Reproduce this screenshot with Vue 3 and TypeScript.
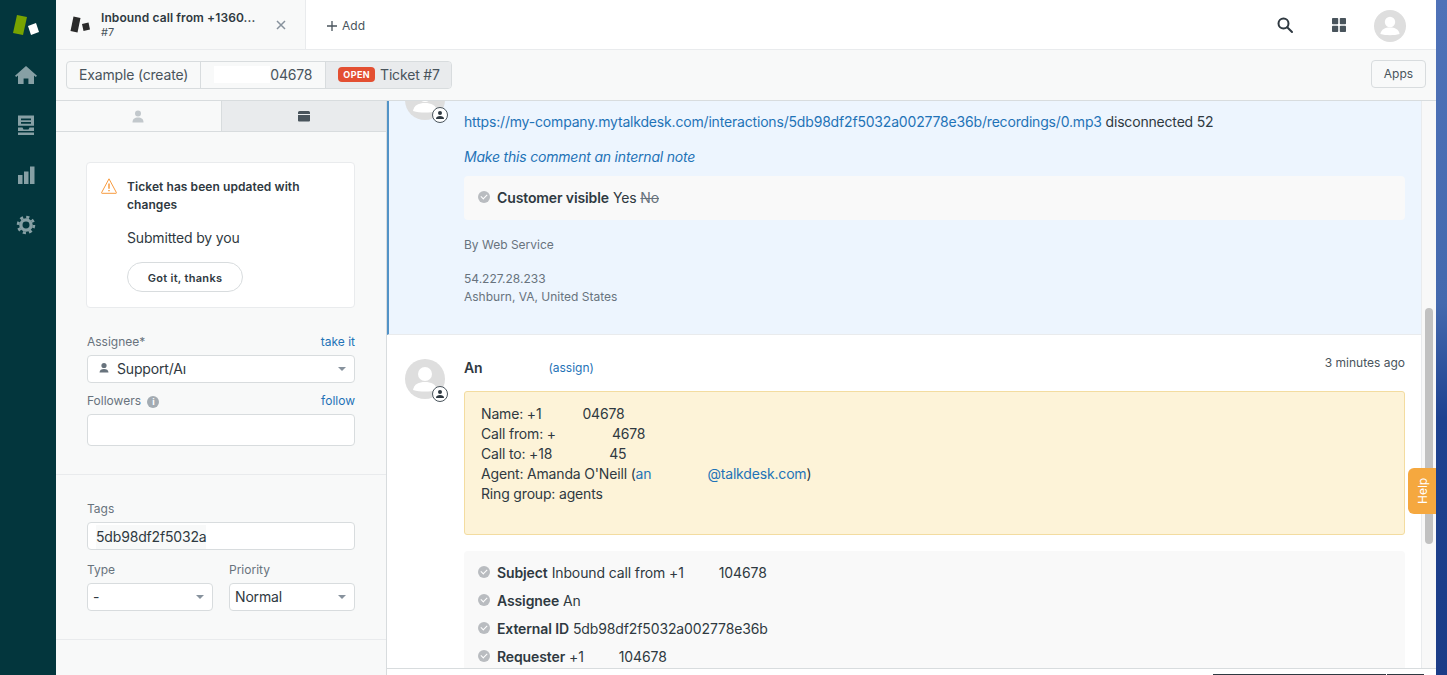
<script setup lang="ts">
const navItems = ['home', 'views', 'reports', 'admin']

const callLines = [
  { label: 'Name: +1', gap: 41, rest: '04678' },
  { label: 'Call from: +', gap: 56, rest: '4678' },
  { label: 'Call to: +18', gap: 57, rest: '45' },
]

const auditRows = [
  { name: 'Subject', text: 'Inbound call from +1', gap: 35, rest: '104678' },
  { name: 'Assignee', text: 'An', gap: 0, rest: '' },
  { name: 'External ID', text: '5db98df2f5032a002778e36b', gap: 0, rest: '' },
  { name: 'Requester', text: '+1', gap: 35, rest: '104678' },
]
</script>

<template>
  <div class="app">
    <nav class="sidebar">
      <svg class="logo" width="34" height="30" viewBox="0 0 34 30">
        <polygon points="6,5 16,7 12,25 2,23" fill="#78a300" />
        <polygon points="17,16 25,13 28,22 20,25" fill="#fff" />
      </svg>
      <button v-for="item in navItems" :key="item" class="nav-item">
        <svg v-if="item === 'home'" width="24" height="24" viewBox="0 0 24 24" fill="#87a0a5">
          <path d="M12 3 1 12.800l1.200 1.200L4 12.400V21h5.600v-5.500h4.800V21H20v-8.600l1.800 1.600 1.200-1.200z" />
        </svg>
        <svg v-else-if="item === 'views'" width="24" height="24" viewBox="0 0 24 24" fill="#87a0a5">
          <path d="M4 2.500h16v10.200H4zM7 5.400v1.800h10V5.400zM7 9v1.800h10V9z" fill-rule="evenodd" />
          <path d="M4 14.500h4.500l1 2h5l1-2H20v3.500H4zM4 19.400h16v2.600H4z" />
        </svg>
        <svg v-else-if="item === 'reports'" width="24" height="24" viewBox="0 0 24 24" fill="#87a0a5">
          <path d="M4 12h4.500v9H4zM10 8.500h4.500V21H10zM16 3.500h4.500V21H16z" />
        </svg>
        <svg v-else width="22" height="22" viewBox="0 0 24 24" fill="none" stroke="#87a0a5">
          <circle cx="12" cy="12" r="5.600" stroke-width="3.600" />
          <circle cx="12" cy="12" r="8.600" stroke-width="3" stroke-dasharray="3.400 3.350" />
        </svg>
      </button>
    </nav>

    <div class="main">
      <header class="topbar">
        <div class="tab">
          <svg width="24" height="20" viewBox="0 0 24 20">
            <polygon points="3.500,1.500 10.500,3 7.500,17.500 .5,16" fill="#2a2a2a" />
            <polygon points="12,9 18.500,7.500 20,14.500 13.500,16" fill="#2a2a2a" />
          </svg>
          <div class="tab-text">
            <div class="tab-title">Inbound call from +1360...</div>
            <div class="tab-sub">#7</div>
          </div>
          <svg class="tab-close" width="10" height="10" viewBox="0 0 10 10" stroke="#87929d" stroke-width="1.500">
            <path d="M1 1l8 8M9 1l-8 8" />
          </svg>
        </div>
        <div class="add-tab">
          <svg width="12" height="12" viewBox="0 0 12 12" stroke="#49545c" stroke-width="1.300">
            <path d="M6 1v10M1 6h10" />
          </svg>
          Add
        </div>
        <div class="top-actions">
          <svg width="18" height="18" viewBox="0 0 18 18" fill="none" stroke="#2f3941" stroke-width="2">
            <circle cx="7.500" cy="7.500" r="5" />
            <path d="M11.200 11.200 16 16" stroke-linecap="round" />
          </svg>
          <svg class="grid-icon" width="16" height="16" viewBox="0 0 16 16" fill="#49545c">
            <rect x="1" y="1" width="6.200" height="6.200" rx="0.800" />
            <rect x="8.800" y="1" width="6.200" height="6.200" rx="0.800" />
            <rect x="1" y="8.800" width="6.200" height="6.200" rx="0.800" />
            <rect x="8.800" y="8.800" width="6.200" height="6.200" rx="0.800" />
          </svg>
          <div class="user-avatar">
            <svg width="32" height="32" viewBox="0 0 40 40" fill="#fff">
              <circle cx="20" cy="15" r="6.500" />
              <path d="M8 30c1-6 6-8 12-8s11 2 12 8c-7 2-17 2-24 0z" />
            </svg>
          </div>
        </div>
      </header>

      <div class="subbar">
        <div class="crumbs">
          <div class="crumb">Example (create)</div>
          <div class="crumb crumb-phone"><span class="mask"></span>04678</div>
          <div class="crumb crumb-active"><span class="status">OPEN</span>Ticket #7</div>
        </div>
        <button class="apps-btn">Apps</button>
      </div>

      <div class="content">
        <aside class="panel">
          <div class="panel-tabs">
            <div class="panel-tab">
              <svg width="12" height="13" viewBox="0 0 12 13" fill="#c2c8cc">
                <circle cx="6" cy="3.400" r="3" />
                <path d="M.5 12.500c0-3.600 2-5 5.500-5s5.500 1.400 5.500 5z" />
              </svg>
            </div>
            <div class="panel-tab panel-tab-active">
              <svg width="12" height="12" viewBox="0 0 12 12" fill="#49545c">
                <path d="M1.500 1h9A1.500 1.500 0 0 1 12 2.500V4H0V2.500A1.500 1.500 0 0 1 1.500 1zM0 5h12v5.500a1 1 0 0 1-1 1H1a1 1 0 0 1-1-1z" />
              </svg>
            </div>
          </div>

          <section class="panel-section">
            <div class="notice">
              <svg width="16" height="16" viewBox="0 0 16 16" fill="none" stroke="#f79a3e" stroke-width="1">
                <path d="M8 .8.6 14.600c-.2.4 0 .7.4.7h14c.4 0 .6-.3.4-.7z" stroke-linejoin="round" />
                <path d="M8 5.500v5.200M8 12v1.300" stroke-width="1.500" />
              </svg>
              <div class="notice-body">
                <div class="notice-title">Ticket has been updated with changes</div>
                <div class="notice-text">Submitted by you</div>
                <button class="notice-btn">Got it, thanks</button>
              </div>
            </div>

            <div class="field-head assignee-head">
              <label>Assignee*</label><a>take it</a>
            </div>
            <div class="select select-assignee">
              <svg width="12" height="12" viewBox="0 0 12 12" fill="#68737d">
                <circle cx="6" cy="3.500" r="2.600" />
                <path d="M1.500 10.500c0-2.500 2-3.500 4.500-3.500s4.500 1 4.500 3.500z" />
              </svg>
              <span class="select-value">Support/A<span class="cut">ı</span></span>
              <i class="caret"></i>
            </div>

            <div class="field-head followers-head">
              <label>Followers <span class="info">i</span></label><a>follow</a>
            </div>
            <div class="input input-tall"></div>
          </section>

          <section class="panel-section tags-section">
            <div class="field-head"><label>Tags</label></div>
            <div class="input input-tags"><span class="tag">5db98df2f5032a</span></div>
            <div class="field-row">
              <div class="field-col">
                <div class="field-head"><label>Type</label></div>
                <div class="select"><span class="select-value">-</span><i class="caret"></i></div>
              </div>
              <div class="field-col">
                <div class="field-head"><label>Priority</label></div>
                <div class="select"><span class="select-value">Normal</span><i class="caret"></i></div>
              </div>
            </div>
          </section>
        </aside>

        <div class="conversation">
          <div class="thread">
            <article class="event event-first">
              <div class="avatar">
                <svg width="40" height="40" viewBox="0 0 40 40" fill="#fff">
                  <circle cx="20" cy="15" r="7" />
                  <path d="M8 31c1-6 6-8 12-8s11 2 12 8c-7 2-17 2-24 0z" />
                </svg>
                <span class="avatar-badge">
                  <svg width="10" height="10" viewBox="0 0 10 10" fill="#2f3941">
                    <circle cx="5" cy="3" r="2" />
                    <path d="M1 9c0-2.200 1.800-3 4-3s4 .8 4 3z" />
                  </svg>
                </span>
              </div>
              <div class="event-body">
                <p class="event-line">
                  <a>https://my-company.mytalkdesk.com/interactions/5db98df2f5032a002778e36b/recordings/0.mp3</a>
                  disconnected 52
                </p>
                <p class="internal-link"><a>Make this comment an internal note</a></p>
                <div class="audit audit-single">
                  <div class="audit-row">
                    <span class="check"></span>
                    <b>Customer visible</b>
                    <span>Yes <s>No</s></span>
                  </div>
                </div>
                <div class="meta">By Web Service</div>
                <div class="meta meta-ip">54.227.28.233<br />Ashburn, VA, United States</div>
              </div>
            </article>

            <article class="event">
              <div class="avatar">
                <svg width="40" height="40" viewBox="0 0 40 40" fill="#fff">
                  <circle cx="20" cy="15" r="7" />
                  <path d="M8 31c1-6 6-8 12-8s11 2 12 8c-7 2-17 2-24 0z" />
                </svg>
                <span class="avatar-badge">
                  <svg width="10" height="10" viewBox="0 0 10 10" fill="#2f3941">
                    <circle cx="5" cy="3" r="2" />
                    <path d="M1 9c0-2.200 1.800-3 4-3s4 .8 4 3z" />
                  </svg>
                </span>
              </div>
              <div class="event-body">
                <div class="event-head">
                  <b class="author">An</b>
                  <a class="assign">(assign)</a>
                  <span class="time">3 minutes ago</span>
                </div>
                <div class="call-box">
                  <div v-for="line in callLines" :key="line.label">
                    {{ line.label }}<span class="gap" :style="{ width: line.gap + 'px' }"></span>{{ line.rest }}
                  </div>
                  <div>Agent: Amanda O'Neill (<a>an<span class="gap gap-mail"></span>@talkdesk.com</a>)</div>
                  <div>Ring group: agents</div>
                </div>
                <div class="audit">
                  <div v-for="row in auditRows" :key="row.name" class="audit-row">
                    <span class="check"></span>
                    <b>{{ row.name }}</b>
                    <span>{{ row.text }}<span class="gap" :style="{ width: row.gap + 'px' }"></span>{{ row.rest }}</span>
                  </div>
                </div>
              </div>
            </article>
          </div>
          <div class="scroll-gutter"><div class="scroll-thumb"></div></div>
          <div class="composer">
            <span class="submit-edge submit-main"></span>
            <span class="submit-edge submit-more"></span>
          </div>
          <div class="help-tab">Help</div>
        </div>
      </div>
    </div>

    <div class="desktop"></div>
  </div>
</template>

<style>
html,
body {
  margin: 0;
  overflow: hidden;
}
</style>

<style scoped>
.app {
  display: flex;
  width: 1447px;
  height: 675px;
  overflow: hidden;
  font-family: Inter, "Liberation Sans", sans-serif;
  font-size: 14px;
  color: #2f3941;
  background: #fff;
}

a {
  color: #1f73b7;
}

.sidebar {
  flex: 0 0 56px;
  background: #03363d;
  display: flex;
  flex-direction: column;
  align-items: center;
}

.logo {
  margin: 10px 0;
}

.nav-item {
  width: 56px;
  height: 50px;
  padding: 0 4px 0 0;
  border: none;
  background: none;
  display: flex;
  align-items: center;
  justify-content: center;
}

.main {
  flex: 0 0 1380px;
  display: flex;
  flex-direction: column;
  min-width: 0;
}

.desktop {
  flex: 1;
  background: linear-gradient(#4f72b8 0, #4469ae 45%, #1e4290 62%, #1b3c87 100%);
}

.topbar {
  flex: 0 0 50px;
  box-sizing: border-box;
  display: flex;
  align-items: stretch;
  border-bottom: 1px solid #e9ebed;
}

.tab {
  flex: 0 0 250px;
  box-sizing: border-box;
  padding-left: 14px;
  display: flex;
  align-items: center;
  background: #f8f9f9;
  border-right: 1px solid #e9ebed;
}

.tab-text {
  margin: 1px 0 0 7px;
  width: 167px;
  font-size: 12px;
  line-height: 15px;
}

.tab-title {
  font-weight: 600;
  white-space: nowrap;
  letter-spacing: 0.1px;
}

.tab-sub {
  font-size: 11px;
  color: #49545c;
}

.tab-close {
  margin-left: 8px;
}

.add-tab {
  display: flex;
  align-items: center;
  gap: 4px;
  margin-left: 20px;
  padding-top: 2px;
  font-size: 12px;
  color: #49545c;
}

.top-actions {
  margin-left: auto;
  padding-right: 30px;
  display: flex;
  align-items: center;
}

.grid-icon {
  margin-left: 37px;
}

.user-avatar {
  margin: 2px 0 0 27px;
  width: 32px;
  height: 32px;
  border-radius: 50%;
  background: #dedede;
}

.subbar {
  flex: 0 0 51px;
  box-sizing: border-box;
  display: flex;
  align-items: center;
  justify-content: space-between;
  padding: 0 10px;
  background: #f8f9f9;
  border-bottom: 1px solid #d8dcde;
}

.crumbs {
  display: flex;
  height: 28px;
  box-sizing: border-box;
  border: 1px solid #d8dcde;
  border-radius: 4px;
  overflow: hidden;
}

.crumb {
  display: flex;
  align-items: center;
  padding: 0 12px 2px;
  font-size: 14px;
  letter-spacing: -0.17px;
  color: #49545c;
  border-right: 1px solid #d8dcde;
}

.crumb-phone {
  padding-left: 13px;
  padding-right: 13px;
}

.mask {
  width: 56px;
  height: 17px;
  background: #fff;
}

.crumb-active {
  padding-right: 11px;
  background: #e9ebed;
  border-right: none;
}

.status {
  background: #e34f32;
  color: #fff;
  font-size: 9px;
  font-weight: 700;
  letter-spacing: 0.4px;
  line-height: 15px;
  padding: 0 5px;
  border-radius: 4px;
  margin-right: 5px;
}

.apps-btn {
  height: 28px;
  width: 55px;
  margin-bottom: 2px;
  padding: 0 0 2px;
  background: #f8f9f9;
  border: 1px solid #d8dcde;
  border-radius: 4px;
  font: 12px Inter, "Liberation Sans", sans-serif;
  color: #49545c;
}

.content {
  flex: 1;
  display: flex;
  min-height: 0;
}

.panel {
  flex: 0 0 331px;
  box-sizing: border-box;
  background: #f8f9f9;
  border-right: 1px solid #d8dcde;
}

.panel-tabs {
  display: flex;
  height: 31px;
  box-sizing: border-box;
  border-bottom: 1px solid #d8dcde;
}

.panel-tab {
  flex: 1;
  display: flex;
  align-items: center;
  justify-content: center;
  border-right: 1px solid #d8dcde;
}

.panel-tab-active {
  background: #e9ebed;
  border-right: none;
}

.panel-section {
  padding: 30px 31px 28px 30px;
  border-bottom: 1px solid #e9ebed;
}

.notice {
  display: flex;
  gap: 10px;
  box-sizing: border-box;
  height: 146px;
  padding: 15px 15px 0 14px;
  background: #fff;
  border: 1px solid #e9ebed;
  border-radius: 4px;
}

.notice-body {
  flex: 1;
}

.notice-title {
  font-size: 12px;
  font-weight: 600;
  line-height: 18px;
  letter-spacing: 0.07px;
}

.notice-text {
  margin-top: 15px;
  font-size: 14px;
  letter-spacing: -0.17px;
  line-height: 18px;
}

.notice-btn {
  margin-top: 15px;
  width: 116px;
  height: 30px;
  padding: 2px 0 0;
  background: #fff;
  border: 1px solid #d8dcde;
  border-radius: 15px;
  font: 600 11px Inter, "Liberation Sans", sans-serif;
  letter-spacing: 0.3px;
  color: #2f3941;
}

.field-head {
  display: flex;
  justify-content: space-between;
  align-items: center;
  height: 14px;
  margin-bottom: 7px;
  margin-left: 1px;
  font-size: 12px;
  color: #68737d;
}

.assignee-head {
  margin-top: 26px;
}

.followers-head {
  margin-top: 10px;
}

.info {
  display: inline-block;
  width: 12px;
  height: 12px;
  margin-left: 3px;
  border-radius: 50%;
  background: #a3abb2;
  color: #fff;
  font-size: 9px;
  font-weight: 700;
  line-height: 12px;
  text-align: center;
}

.select,
.input {
  display: flex;
  align-items: center;
  box-sizing: border-box;
  height: 28px;
  margin-left: 1px;
  padding: 0 8px 2px 5px;
  background: #fff;
  border: 1px solid #d8dcde;
  border-radius: 4px;
  font-size: 14px;
  letter-spacing: -0.17px;
}

.input {
  padding-left: 8px;
}

.input-tall {
  height: 32px;
}

.input-tags {
  padding-top: 2px;
  padding-bottom: 0;
}

.select-assignee svg {
  margin: 0 7px 0 5px;
}

.select-value {
  flex: 1;
}

.cut {
  display: inline-block;
}

.caret {
  width: 0;
  height: 0;
  margin-top: 2px;
  border-left: 4px solid transparent;
  border-right: 4px solid transparent;
  border-top: 4px solid #87929d;
}

.tags-section {
  padding-top: 26px;
}

.tag {
  background: #f8f9f9;
  line-height: 24px;
}

.field-row {
  display: flex;
  gap: 16px;
  margin: 12px 0 0 1px;
}

.field-row .field-head,
.field-row .select {
  margin-left: 0;
}

.field-col {
  flex: 1;
}

.conversation {
  flex: 1;
  position: relative;
  display: grid;
  grid-template-columns: 1fr 15px;
  grid-template-rows: 1fr 7px;
  min-height: 0;
  overflow: hidden;
}

.thread {
  overflow: hidden;
  min-height: 0;
}

.event {
  display: flex;
  gap: 19px;
  padding: 24px 16px 0 18px;
}

.event-first {
  height: 279px;
  box-sizing: border-box;
  margin-top: -45px;
  padding-left: 16px;
  background: #edf5fe;
  border-left: 2px solid #5293c7;
  border-bottom: 1px solid #e9ebed;
}

.avatar {
  position: relative;
  flex: 0 0 40px;
  width: 40px;
  height: 40px;
  border-radius: 50%;
  background: #dedede;
}

.avatar-badge {
  position: absolute;
  right: -3px;
  bottom: -3px;
  box-sizing: border-box;
  width: 16px;
  height: 16px;
  display: flex;
  align-items: center;
  justify-content: center;
  border: 1px solid #49545c;
  border-radius: 50%;
  background: #fff;
}

.event-body {
  flex: 1;
  min-width: 0;
}

.event-line {
  margin: 32px 0 0;
  line-height: 20px;
  letter-spacing: -0.18px;
}

.internal-link {
  margin: 15px 0 0;
  line-height: 20px;
  font-style: italic;
  letter-spacing: -0.2px;
}

.audit {
  background: #f9f9f9;
  border-radius: 4px;
  padding: 7px 14px 9px;
  margin-top: 16px;
  letter-spacing: -0.12px;
}

.audit-single {
  margin-top: 9px;
}

.audit-row {
  display: flex;
  align-items: center;
  height: 28px;
  white-space: nowrap;
}

.audit-row b {
  font-weight: 600;
  margin-right: 4px;
}

.audit-row s {
  color: #68737d;
}

.check {
  flex: 0 0 12px;
  width: 12px;
  height: 12px;
  margin-right: 7px;
  border-radius: 50%;
  background: #b9bcc0;
  position: relative;
}

.check::after {
  content: "";
  position: absolute;
  left: 3px;
  top: 3px;
  width: 5px;
  height: 3px;
  border-left: 1.300px solid #fff;
  border-bottom: 1.300px solid #fff;
  transform: rotate(-45deg);
}

.meta {
  margin-top: 16px;
  font-size: 12px;
  line-height: 18px;
  color: #68737d;
}

.meta-ip {
  margin-top: 16px;
}

.event-head {
  display: flex;
  align-items: flex-start;
  height: 32px;
  line-height: 18px;
}

.author {
  font-weight: 600;
  letter-spacing: -0.17px;
}

.assign {
  margin-left: 66px;
  font-size: 12px;
}

.time {
  margin-left: auto;
  margin-top: -5px;
  font-size: 12px;
  color: #49545c;
}

.call-box {
  box-sizing: border-box;
  height: 144px;
  padding: 12px 16px;
  line-height: 20px;
  letter-spacing: -0.17px;
  background: #fdf3d8;
  border: 1px solid #f3dca0;
  border-radius: 3px;
}

.gap {
  display: inline-block;
  height: 1px;
}

.gap-mail {
  width: 56px;
}

.scroll-gutter {
  grid-row: 1;
  grid-column: 2;
  background: #f8f8f8;
  border-left: 1px solid #e9ebed;
  min-height: 0;
}

.scroll-thumb {
  width: 8px;
  height: 236px;
  margin: 207px 0 0 3px;
  border-radius: 4px;
  background: #c1c1c1;
}

.composer {
  grid-row: 2;
  grid-column: 1 / 3;
  display: flex;
  justify-content: flex-end;
  align-items: flex-end;
  gap: 1px;
  padding-right: 12px;
  background: #fff;
  border-top: 1px solid #d8dcde;
}

.submit-edge {
  height: 1px;
  background: #2f3941;
}

.submit-main {
  width: 173px;
}

.submit-more {
  width: 37px;
}

.help-tab {
  position: absolute;
  right: 0;
  top: 367px;
  box-sizing: border-box;
  width: 28px;
  height: 46px;
  display: flex;
  align-items: center;
  justify-content: center;
  background: #f5a83f;
  color: #fff;
  font-size: 12px;
  writing-mode: vertical-rl;
  rotate: 180deg;
  border-radius: 0 6px 6px 0;
}
</style>
